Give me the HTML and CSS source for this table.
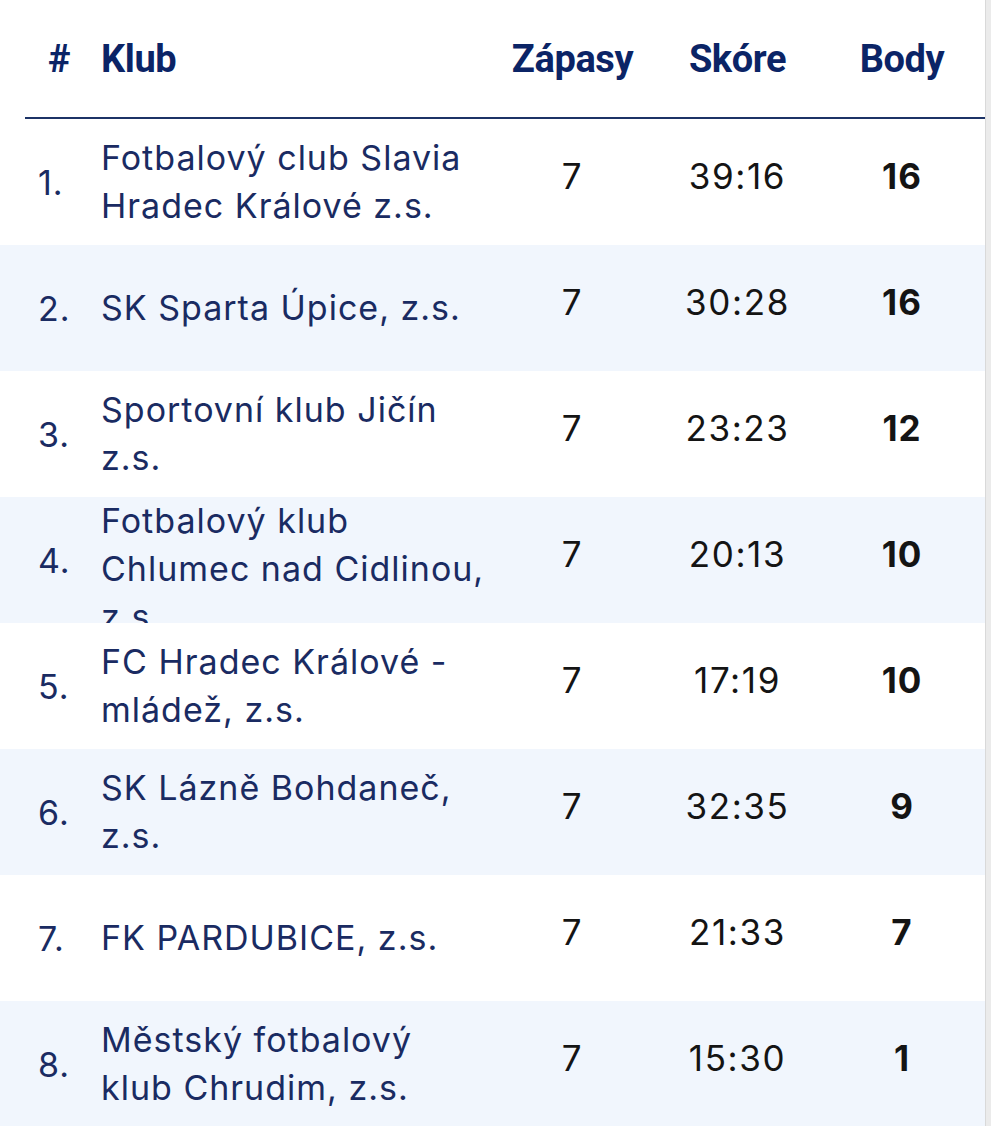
FILE: index.html
```html
<!DOCTYPE html>
<html lang="cs">
<head>
<meta charset="utf-8">
<title>Tabulka</title>
<link rel="stylesheet" href="styles.css">
</head>
<body>
<div class="page">
  <div class="table">
    <div class="head">
      <div class="h-rank">#</div>
      <div class="h-name">Klub</div>
      <div class="h-num">Zápasy</div>
      <div class="h-num">Skóre</div>
      <div class="h-num">Body</div>
    </div>
    <div class="row">
      <div class="rank">1.</div>
      <div class="name">Fotbalový club Slavia Hradec Králové z.s.</div>
      <div class="num">7</div>
      <div class="num">39:16</div>
      <div class="num pts">16</div>
    </div>
    <div class="row alt">
      <div class="rank">2.</div>
      <div class="name">SK Sparta Úpice, z.s.</div>
      <div class="num">7</div>
      <div class="num">30:28</div>
      <div class="num pts">16</div>
    </div>
    <div class="row">
      <div class="rank">3.</div>
      <div class="name">Sportovní klub Jičín z.s.</div>
      <div class="num">7</div>
      <div class="num">23:23</div>
      <div class="num pts">12</div>
    </div>
    <div class="row alt">
      <div class="rank">4.</div>
      <div class="name">Fotbalový klub Chlumec nad Cidlinou, z.s.</div>
      <div class="num">7</div>
      <div class="num">20:13</div>
      <div class="num pts">10</div>
    </div>
    <div class="row">
      <div class="rank">5.</div>
      <div class="name">FC Hradec Králové - mládež, z.s.</div>
      <div class="num">7</div>
      <div class="num">17:19</div>
      <div class="num pts">10</div>
    </div>
    <div class="row alt">
      <div class="rank">6.</div>
      <div class="name">SK Lázně Bohdaneč, z.s.</div>
      <div class="num">7</div>
      <div class="num">32:35</div>
      <div class="num pts">9</div>
    </div>
    <div class="row">
      <div class="rank">7.</div>
      <div class="name">FK PARDUBICE, z.s.</div>
      <div class="num">7</div>
      <div class="num">21:33</div>
      <div class="num pts">7</div>
    </div>
    <div class="row alt">
      <div class="rank">8.</div>
      <div class="name">Městský fotbalový klub Chrudim, z.s.</div>
      <div class="num">7</div>
      <div class="num">15:30</div>
      <div class="num pts">1</div>
    </div>
  </div>
  <div class="scrollbar"></div>
</div>
</body>
</html>
```

FILE: styles.css
```css
html, body {
  margin: 0;
  padding: 0;
  background: #ffffff;
}

.page {
  display: flex;
  width: 991px;
  height: 1126px;
  overflow: hidden;
}

.table {
  width: 985px;
  flex: none;
}

.scrollbar {
  flex: 1;
  background: #ebebeb;
  border-left: 1px solid #d9d9d9;
}

.head,
.row {
  display: grid;
  grid-template-columns: 76px 404px 135px 195px 134px;
  padding-left: 25px;
  padding-right: 16px;
  align-items: center;
}

.head {
  height: 117px;
  margin-left: 25px;
  padding-left: 0;
  border-bottom: 2px solid #1c3366;
  font-family: Roboto, "Liberation Sans", sans-serif;
  font-weight: 700;
  font-size: 38px;
  letter-spacing: -0.4px;
  color: #0b2466;
}

.h-rank {
  padding-left: 23px;
}

.h-num {
  text-align: center;
}

.row {
  height: 126px;
  overflow: hidden;
  font-family: Inter, "Noto Sans", sans-serif;
  color: #1a2b62;
}

.row.alt {
  background: #f1f6fd;
}

.rank {
  padding-left: 13px;
  font-size: 34px;
  letter-spacing: 1px;
}

.name {
  font-size: 34px;
  letter-spacing: 1px;
  line-height: 48px;
  max-height: 126px;
  overflow: hidden;
  padding-right: 15px;
}

.num {
  text-align: center;
  font-size: 35px;
  letter-spacing: 1.6px;
  color: #141414;
  padding-bottom: 12px;
}

.num.pts {
  font-weight: 700;
  letter-spacing: 1px;
}
```
